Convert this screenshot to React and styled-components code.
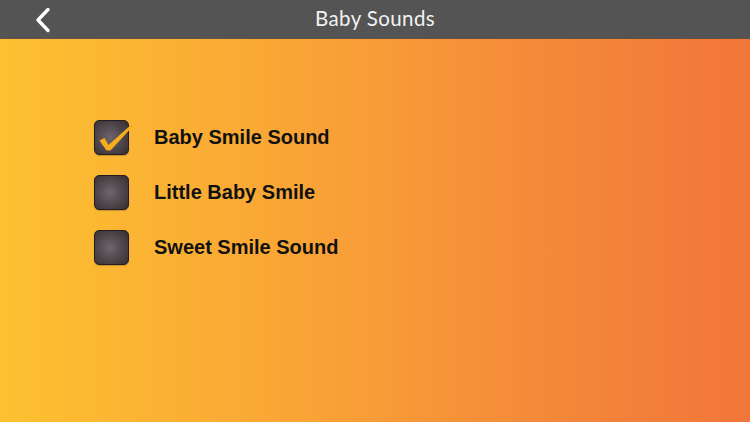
import React, { useState } from 'react'
import styled, { createGlobalStyle } from 'styled-components'

const sounds = ['Baby Smile Sound', 'Little Baby Smile', 'Sweet Smile Sound']

function Check() {
    return (
        <CheckSvg viewBox="0 0 44 44">
            <path d="M5.5 20.5 L10.5 18 L14.5 25 L38.5 3.5 L40 5 L16.5 30.5 L12.5 30.5 Z" fill="#f8ae1c" />
        </CheckSvg>
    )
}

function App() {
    const [selected, setSelected] = useState(0)

    return (
        <Screen>
            <GlobalStyle />
            <Header>
                <BackButton aria-label="Back">
                    <svg width="18" height="26" viewBox="0 0 18 26">
                        <path d="M14 2.5 L4 13 L14 23.5" fill="none" stroke="#fff" strokeWidth="3.4" strokeLinecap="round" strokeLinejoin="round" />
                    </svg>
                </BackButton>
                <Title>Baby Sounds</Title>
            </Header>
            <List>
                {sounds.map((name, i) => (
                    <Row key={name} onClick={() => setSelected(i)}>
                        <Box>{selected === i && <Check />}</Box>
                        <Label>{name}</Label>
                    </Row>
                ))}
            </List>
        </Screen>
    )
}

export default App

const GlobalStyle = createGlobalStyle`
    html, body {
        margin: 0;
        padding: 0;
        width: 750px;
        height: 422px;
        overflow: hidden;
    }
`

const Screen = styled.div`
    width: 750px;
    height: 422px;
    display: flex;
    flex-direction: column;
    background: linear-gradient(90deg, #fdc131 0%, #f9a436 40%, #f4873a 75%, #f2763a 100%);
    font-family: "Liberation Sans", Arial, sans-serif;
`

const Header = styled.div`
    height: 38px;
    flex-shrink: 0;
    background: #545454;
    position: relative;
    display: flex;
    align-items: center;
    justify-content: center;
    border-bottom: 1px solid rgba(120, 80, 40, 0.35);
`

const BackButton = styled.div`
    position: absolute;
    left: 34px;
    top: 7px;
    cursor: pointer;
`

const Title = styled.div`
    color: #f2f2f2;
    font-family: Lato, "Open Sans", sans-serif;
    font-size: 20.5px;
    letter-spacing: 0.4px;
    margin-top: -3px;
`

const List = styled.div`
    display: flex;
    flex-direction: column;
    gap: 20px;
    padding: 81px 0 0 94px;
`

const Row = styled.div`
    display: flex;
    align-items: center;
    gap: 25px;
    height: 35px;
    cursor: pointer;
`

const Box = styled.div`
    position: relative;
    width: 33px;
    height: 33px;
    border-radius: 5px;
    border: 1px solid #231d1f;
    background: radial-gradient(circle at 45% 50%, #6e666b 0%, #4d4549 55%, #352e31 100%);
    box-shadow: 0 1px 1px rgba(0, 0, 0, 0.2);
`

const CheckSvg = styled.svg`
    position: absolute;
    left: -1px;
    top: -1px;
    width: 44px;
    height: 44px;
`

const Label = styled.div`
    font-weight: bold;
    font-size: 20px;
    color: #111;
`
